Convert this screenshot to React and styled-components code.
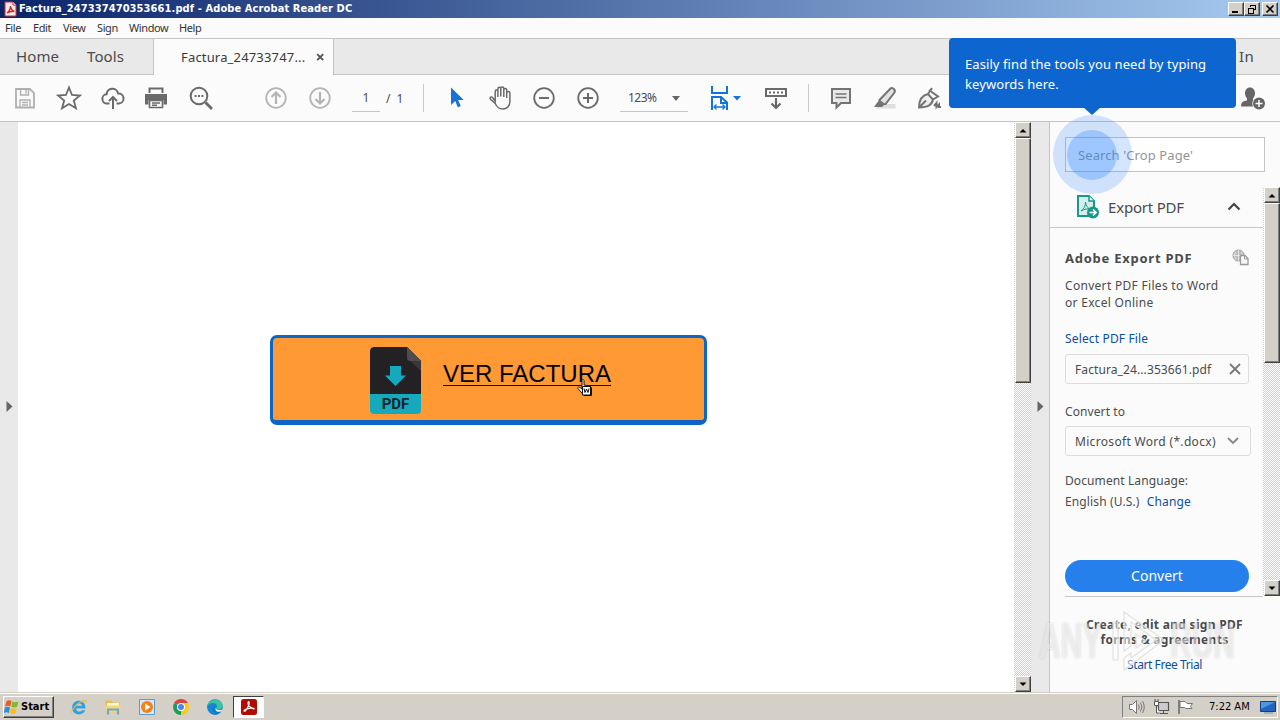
import React from 'react';
import styled, { createGlobalStyle, css } from 'styled-components';

const UI = '"Noto Sans", "Open Sans", sans-serif';
const CLASSIC = '"DejaVu Sans Condensed", "DejaVu Sans", sans-serif';

export default function App() {
  return (
    <Screen>
      <GlobalStyle />
      <TitleBar>
        <AppIcon />
        <WindowTitle>Factura_247337470353661.pdf - Adobe Acrobat Reader DC</WindowTitle>
        <WindowControls />
      </TitleBar>
      <MenuBar>
        <MenuItem $width={28}>File</MenuItem>
        <MenuItem $width={30}>Edit</MenuItem>
        <MenuItem $width={34}>View</MenuItem>
        <MenuItem $width={32}>Sign</MenuItem>
        <MenuItem $width={50}>Window</MenuItem>
        <MenuItem $width={30}>Help</MenuItem>
      </MenuBar>
      <TabBar>
        <NavTabs>
          <NavTab $width={71}>Home</NavTab>
          <NavTab $width={60}>Tools</NavTab>
        </NavTabs>
        <DocTab>
          <DocName>Factura_24733747...</DocName>
          <svg width='9' height='9' viewBox='0 0 9 9'>
            <path d='M1.2 1.2l6 6M7.2 1.2l-6 6' stroke='#555' strokeWidth='1.9' />
          </svg>
        </DocTab>
        <TabFill>Sign In</TabFill>
      </TabBar>
      <Toolbar />
      <Workspace>
        <SideHandle $width={18}>
          <Arrow />
        </SideHandle>
        <Page>
          <InvoiceButton>
            <PdfFileIcon />
            <InvoiceLink>VER FACTURA</InvoiceLink>
            <HandCursor />
          </InvoiceButton>
        </Page>
        <Scrollbar thumb={245} />
        <SideHandle $width={19} $bordered>
          <Arrow />
        </SideHandle>
        <ExportPanel />
      </Workspace>
      <Taskbar />
      <Pulse />
      <Tooltip>
        Easily find the tools you need by typing
        <br />
        keywords here.
      </Tooltip>
      <Watermark />
    </Screen>
  );
}

const AppIcon = () => (
  <svg width='13' height='16' viewBox='0 0 13 16'>
    <path d='M1 1h8l3 3v11H1z' fill='#fbe9e7' stroke='#d32f2f' />
    <path d='M9 1v3h3' fill='#fff' stroke='#d32f2f' />
    <path d='M3 12c2-1.5 3.5-4 3.500-7 .3 3 2 5 4 5.500-2-.6-5-.1-7.500 1.500z' fill='none' stroke='#d9231c' strokeWidth='1.400' />
  </svg>
);

const WindowControls = () => (
  <Controls>
    <ClassicButton $width={16} $height={14}>
      <svg width='10' height='10'>
        <path d='M1 8h6' stroke='#000' strokeWidth='2' />
      </svg>
    </ClassicButton>
    <ClassicButton $width={16} $height={14}>
      <svg width='10' height='10' shapeRendering='crispEdges'>
        <path d='M3.500 3V1.500h5v4H7M3 1h6M1.500 4v5h5V4zM1 4h6' fill='none' stroke='#000' />
      </svg>
    </ClassicButton>
    <Spacer $width={2} />
    <ClassicButton $width={16} $height={14}>
      <svg width='10' height='10'>
        <path d='M1.500 1.500l7 7M8.500 1.500l-7 7' stroke='#000' strokeWidth='1.600' />
      </svg>
    </ClassicButton>
  </Controls>
);

const Icon = ({ children, color = '#6a6a6a', viewBox = '0 0 26 26' }) => (
  <IconCell>
    <svg width='26' height='26' viewBox={viewBox} fill='none' stroke={color} strokeWidth='1.8'>
      {children}
    </svg>
  </IconCell>
);

const Toolbar = () => (
  <Tools>
    <Icon color='#b0b0b0'>
      <path d='M4 4h14l4 4v14.500H4z' />
      <path d='M8.500 4v6h8V4M14 5v3.500M8 22v-7h10v7M10 17.500h6M10 20h6' strokeWidth='1.400' />
    </Icon>
    <Icon>
      <path d='M13 2.500l3 7.500 8 .5-6.200 5 2.200 7.800-7-4.300-7 4.300 2.200-7.800-6.200-5 8-.5z' />
    </Icon>
    <Icon>
      <path d='M9.500 18.500H7.300a4.600 4.600 0 0 1-.7-9.200 5.800 5.800 0 0 1 11.500-.8 5 5 0 0 1 .9 10h-2.500M13 24V12.500M9 16l4-4 4 4' strokeWidth='2' />
    </Icon>
    <Icon viewBox='1 0 26 26'>
      <path d='M6.500 8V3.500h13V8' strokeWidth='2' />
      <path d='M2 9h22v10.500h-3.500V15h-15v4.500H2z' fill='#6a6a6a' stroke='none' />
      <path d='M6.500 15.500v7h13v-7zM9 18h8M9 20.300h5' strokeWidth='1.600' />
    </Icon>
    <Icon>
      <circle cx='11' cy='11' r='8.300' strokeWidth='2' />
      <path d='M17.500 17.500l6.500 6.500' strokeWidth='2.800' />
      <path d='M6.600 11h2M10 11h2M13.400 11h2' strokeWidth='2' />
    </Icon>
    <Spacer $width={31} />
    <Icon color='#b4b4b4'>
      <circle cx='13' cy='13' r='9.800' />
      <path d='M13 19V8M8.500 12L13 7.500l4.500 4.500' strokeWidth='2.200' />
    </Icon>
    <Icon color='#b4b4b4'>
      <circle cx='13' cy='13' r='9.800' />
      <path d='M13 7v11M8.500 14l4.500 4.500 4.500-4.500' strokeWidth='2.200' />
    </Icon>
    <Spacer $width={10} />
    <Field $width={28}>1</Field>
    <PageCount>/ 1</PageCount>
    <Divider />
    <Spacer $width={10} />
    <Icon viewBox='-1 0 26 26'>
      <path d='M7 2.500v17.500l4.200-4 2.600 6.300 3-1.300-2.700-6h5.600z' fill='#1473d6' stroke='none' />
    </Icon>
    <Icon viewBox='-1 0 26 26'>
      <path
        d='M7.200 16V6.500c0-2 2.700-2 2.700 0V12 4c0-2.200 2.900-2.200 2.900 0v7.500V3.500c0-2 3-2 3 0V12 5c0-2 2.900-2 2.900 0v8V8c0-2 3.200-2 3.200 0v8.500c0 4.500-3 7.500-7 7.500-4.500 0-6-2-7.700-5.500L2.300 14c-.8-1.600 1-2.600 2.200-1.500z'
        strokeWidth='1.500'
      />
    </Icon>
    <Icon>
      <circle cx='13' cy='13' r='9.800' />
      <path d='M8 13h10' strokeWidth='2' />
    </Icon>
    <Icon>
      <circle cx='13' cy='13' r='9.800' />
      <path d='M8 13h10M13 8v10' strokeWidth='2' />
    </Icon>
    <Spacer $width={10} />
    <Field $width={68} $zoom>
      123%
      <Caret width='8' height='5'>
        <path d='M0 0h8L4 5z' fill='#666' />
      </Caret>
    </Field>
    <Spacer $width={21} />
    <svg width='32' height='26' viewBox='0 0 32 26' fill='none' stroke='#1473d6' strokeWidth='2'>
      <path d='M3 1v7h15V1M3 25V12h9l6 5.500V25M12 12v6h6' />
      <path d='M5 22h11M7.500 19.500L5 22l2.500 2.500M13.500 19.500L16 22l-2.500 2.500' strokeWidth='1.300' />
      <path d='M24 11h8l-4 4.500z' fill='#1473d6' stroke='none' />
    </svg>
    <Spacer $width={13} />
    <Icon>
      <path d='M3 4h20v7H3z' strokeWidth='2' />
      <path d='M6 7.500h14' strokeWidth='2' strokeDasharray='2 2' />
      <path d='M13 13v9M8.500 18.500l4.500 4.500 4.500-4.500' strokeWidth='2.200' />
    </Icon>
    <Spacer $width={10} />
    <Divider />
    <Spacer $width={10} />
    <Icon color='#747474'>
      <path d='M4 4h18v14h-9l-4.500 4.500V18H4z' fill='#e9e9e9' strokeWidth='2' />
      <path d='M7.500 9h11M7.500 12.500h11' strokeWidth='1.300' />
    </Icon>
    <Icon color='#747474'>
      <path d='M9 19h14.500v4.500H4z' fill='#dedede' stroke='none' />
      <path d='M7.500 15L18.500 3.500c1.500-1.500 5.500 1 4 4L13.500 19l-5 .5z' fill='#e2e2e2' strokeWidth='2' />
      <path d='M7.500 14.500l5.500 4.500-3 3H2z' fill='#747474' stroke='none' />
    </Icon>
    <Icon color='#747474'>
      <path d='M3 22.500c0-7 2-12 9-13.500l5 5.500c-1 6-5.500 7.500-14 8zM3 22.500l7-7' fill='#eee' strokeWidth='2' />
      <path d='M12 9l4-6M13 5l9 6.500-5 3M18 21l2.500-3v4l2.500-2.500V22h2' strokeWidth='2' />
    </Icon>
    <Spacer $width={289} />
    <svg width='26' height='26' viewBox='0 0 26 26'>
      <path d='M5 8c0-7.500 10-7.500 10 0 0 3-1 4-2 5.500v2l3 1.500c-1.500 2-1.700 3-1.500 4.500H1c0-5 3-5.500 6-6v-2C6 12 5 11 5 8z' fill='#666' />
      <circle cx='19' cy='18.500' r='6.700' fill='#fbfbfb' />
      <circle cx='19' cy='18.500' r='6' fill='#666' />
      <path d='M15.500 18.500h7M19 15v7' stroke='#fff' strokeWidth='1.500' />
    </svg>
  </Tools>
);

const Arrow = () => (
  <svg width='7' height='11' viewBox='0 0 7 11'>
    <path d='M0.500 0l6 5.500-6 5.500z' fill='#666' />
  </svg>
);

const Scrollbar = ({ thumb }) => (
  <Track>
    <ClassicButton $width={16} $height={16}>
      <svg width='9' height='5'>
        <path d='M0.500 4.500h7L4 1z' fill='#000' />
      </svg>
    </ClassicButton>
    <Thumb style={{ height: thumb }} />
    <ClassicButton $width={16} $height={16} $end>
      <svg width='9' height='5'>
        <path d='M0.500 0.500h7L4 4z' fill='#000' />
      </svg>
    </ClassicButton>
  </Track>
);

const PdfFileIcon = () => (
  <FileIcon>
    <svg width='51' height='47' viewBox='0 0 51 47'>
      <path d='M4 0h33l14 14v33H0V4a4 4 0 0 1 4-4z' fill='#242124' />
      <path d='M37 0l14 14v10L37 11z' fill='#3a3738' />
      <path d='M37 0l14 14H40a3 3 0 0 1-3-3z' fill='#504c4d' />
      <path d='M20 19h11v9.500h5L25.500 39 15 28.500h5z' fill='#16a9bd' />
    </svg>
    <FileBand>PDF</FileBand>
  </FileIcon>
);

const HandCursor = () => (
  <CursorSvg width='16' height='18' viewBox='0 0 16 18'>
    <path d='M5 1.500c0-1.300 2-1.300 2 0V6l6 1 1.500 2v7.500H7L1 9.500C.5 8 2 7.500 3 8.500l2 1.500z' fill='#fff' stroke='#111' />
    <path d='M5.500 7.500h8v8.500h-8z' fill='#fff' stroke='#111' />
    <path d='M7 9.500l1 4 1.500-3.500 1.500 3.500 1-4' fill='none' stroke='#111' />
  </CursorSvg>
);

const ExportPanel = () => (
  <Panel>
    <SearchBox>Search 'Crop Page'</SearchBox>
    <PanelBody>
      <PanelContent>
        <PanelHeader>
          <svg width='24' height='26' viewBox='0 0 24 26'>
            <path d='M2 2h11l5 5v15H2z' fill='#d6eeeb' stroke='#16998c' strokeWidth='2' />
            <path d='M13 2v5h5' fill='#fff' stroke='#16998c' strokeWidth='1.500' />
            <path d='M5 17c3-2 4.500-5 4.500-9 .5 4 2 6 5 7-3-.5-6 0-9.500 2z' fill='none' stroke='#16998c' />
            <circle cx='17' cy='18.500' r='6' fill='#16998c' />
            <path d='M13.500 18.500h6M17 15.500l3 3-3 3' fill='none' stroke='#fff' strokeWidth='1.700' />
          </svg>
          <HeaderLabel>Export PDF</HeaderLabel>
          <svg width='14' height='11' viewBox='0 0 14 11'>
            <path d='M1.500 7.500L7 2l5.500 5.500' fill='none' stroke='#444' strokeWidth='2.200' />
          </svg>
        </PanelHeader>
        <Form>
          <FormTitle>
            Adobe Export PDF
            <svg width='17' height='17' viewBox='0 0 17 17'>
              <circle cx='6.500' cy='6.500' r='5.500' fill='#bbb' stroke='#999' />
              <path d='M1 6.500h11M6.500 1v11M3.500 2.500q-2 4 0 8M9.500 2.500q2 4 0 8' stroke='#eee' strokeWidth='.8' fill='none' />
              <path d='M8.500 6.500h4.500l3 3v6H8.500z' fill='#fafafa' stroke='#999' strokeWidth='1.300' />
              <path d='M12.500 6.500v3.500H16' fill='none' stroke='#999' />
            </svg>
          </FormTitle>
          <Intro>
            Convert PDF Files to Word
            <br />
            or Excel Online
          </Intro>
          <SelectFile>Select PDF File</SelectFile>
          <InputBox $width={184}>
            <FileName>Factura_24...353661.pdf</FileName>
            <svg width='12' height='12' viewBox='0 0 12 12'>
              <path d='M1 1l10 10M11 1L1 11' stroke='#777' strokeWidth='1.800' />
            </svg>
          </InputBox>
          <ConvertLabel>Convert to</ConvertLabel>
          <InputBox $width={186}>
            <Format>Microsoft Word (*.docx)</Format>
            <svg width='12' height='8' viewBox='0 0 12 8'>
              <path d='M1 1l5 5 5-5' fill='none' stroke='#888' strokeWidth='1.900' />
            </svg>
          </InputBox>
          <LanguageLabel>Document Language:</LanguageLabel>
          <Language>
            English (U.S.) <ChangeLink>Change</ChangeLink>
          </Language>
          <ConvertButton>Convert</ConvertButton>
        </Form>
      </PanelContent>
      <Scrollbar thumb={160} />
    </PanelBody>
    <Promo>
      Create, edit and sign PDF
      <br />
      forms &amp; agreements
      <TrialLink>Start Free Trial</TrialLink>
    </Promo>
  </Panel>
);

const Taskbar = () => (
  <Bar>
    <StartButton>
      <svg width='16' height='16' viewBox='0 0 16 16'>
        <path d='M2.500 2.500Q5 .5 7.500 2L6.300 7.500Q4 6 1 7.500z' fill='#ee5a22' />
        <path d='M8.500 2.500Q11 4 14.500 2.500L13 8Q10 9 7.300 7.800z' fill='#7fba28' />
        <path d='M.8 8.700Q3.500 7 6 8.500L4.800 14Q2.500 12.500-.2 14z' fill='#2c8fd8' />
        <path d='M7 9Q10 10.500 12.800 9.200L11.500 14.500Q8.500 15.800 5.800 14z' fill='#fcbd1e' />
      </svg>
      Start
    </StartButton>
    <Launchers>
      <svg width='18' height='18' viewBox='0 0 18 18'>
        <path d='M15.500 10.500H6c.4 3.500 4.500 4 6 1.800h3.200c-2 6-13 5.700-13-2.800C2.200.5 16 .5 15.500 10.500zM6 7.800h6c-.5-3-5.500-3-6 0z' fill='#2fa3e0' />
        <path d='M2 16C-1 13 7 4 14 2c4-.8 3 2.500 2 4 .5-3-1-3.200-3-2.400C7 6 1.500 12.500 2 16z' fill='#efb93b' />
      </svg>
      <svg width='18' height='18' viewBox='0 0 18 18'>
        <path d='M1.500 2.500h6l1.500 2h7v10H1.500z' fill='#e7bd55' />
        <path d='M3 5h12v6H3z' fill='#fff6cc' />
        <path d='M1.500 7.500h15v7h-15z' fill='#f5d77a' />
        <path d='M4 16.500V11.500h10v5' fill='none' stroke='#67a9d8' strokeWidth='2.200' />
      </svg>
      <svg width='18' height='18' viewBox='0 0 18 18'>
        <path d='M1.500 1.500h15v15h-15z' fill='#d5e8f8' stroke='#5b9bd5' />
        <circle cx='9' cy='9' r='6' fill='#f48216' />
        <path d='M7 5.500v7L12.500 9z' fill='#fff' />
      </svg>
      <svg width='18' height='18' viewBox='0 0 18 18'>
        <path d='M9 9L2.100 5A8 8 0 0 1 15.900 5z' fill='#db4437' />
        <path d='M9 9L2.100 5A8 8 0 0 0 9 17l4-6z' fill='#1f9d58' />
        <path d='M9 9l0 8A8 8 0 0 0 15.900 5H9z' fill='#fbc916' />
        <circle cx='9' cy='9' r='4' fill='#fff' />
        <circle cx='9' cy='9' r='3' fill='#4285f4' />
      </svg>
      <svg width='18' height='18' viewBox='0 0 18 18'>
        <circle cx='9' cy='9' r='7.800' fill='#127bc9' />
        <path d='M1.300 8C2 0 16.500-.5 16.800 8c0 3-4 4-6.300 2.700C12 7 7 4.500 1.300 8z' fill='#38c5a0' />
        <path d='M1.300 8c3-4.500 10-3.500 9.500.5-3-2-6 2-3.300 5.500C10 16.500 13 16.500 15 14c-4 5-13.500 3-13.700-6z' fill='#1486d2' />
        <path d='M10.500 8.500c-1.500 2 .5 4.500 6 3l-1 1.700c-4 2-8-1-5-4.700z' fill='#e4ecef' />
      </svg>
    </Launchers>
    <ActiveTask>
      <svg width='16' height='16' viewBox='0 0 16 16'>
        <rect width='16' height='16' rx='2.500' fill='#b30b00' />
        <path d='M3 12c-1-1.500 8.500-4 10-2.500S7 8 7 4.500s2-1.500 1 1S4.500 13.500 3 12z' fill='none' stroke='#fff' strokeWidth='1.100' />
      </svg>
    </ActiveTask>
    <Tray>
      <svg width='18' height='16' viewBox='0 0 18 16' fill='none' stroke='#777'>
        <path d='M1.500 5.500h3l4-4v13l-4-4h-3z' fill='#fff' />
        <path d='M10.500 5.500q1.500 2.500 0 5M12.500 3.500q3 4.500 0 9M14.500 2q3.500 6 0 12' />
      </svg>
      <svg width='17' height='16' viewBox='0 0 17 16' fill='none' stroke='#555'>
        <path d='M5.500 3.500h10v8h-10z' fill='#ccc' strokeWidth='1.200' />
        <path d='M7 14.500h8M10.500 12v2M1.500 2.500h4v4h-4zM2 0v2M5 0v2M3.500 7v7h3' fill='#fff' />
      </svg>
      <svg width='17' height='16' viewBox='0 0 17 16'>
        <path d='M2 1v14' stroke='#777' strokeWidth='1.800' />
        <path d='M3 2.500h5l2 2h5.500l-2 3 1.500 2H9l-1.500-1H3z' fill='#fff' stroke='#777' />
      </svg>
      <Clock>7:22 AM</Clock>
      <svg width='16' height='14' viewBox='0 0 16 14'>
        <path d='M0.500 1.500h15v10H.5z' fill='#2464bd' stroke='#173f7c' />
        <path d='M1 2h14L1 9z' fill='#4e96e6' />
        <path d='M4 13h9' stroke='#8aa' strokeWidth='1.500' />
      </svg>
    </Tray>
  </Bar>
);

const Watermark = () => (
  <WatermarkLayer>
    <WatermarkWord $width={73} $scale={0.6}>
      ANY
    </WatermarkWord>
    <svg width='58' height='62' viewBox='0 0 58 62' fill='#fff' fillOpacity='.5' stroke='#e2e2e2' strokeWidth='1.200'>
      <path d='M1 12h5v38H1z' />
      <path d='M12 2l40 28-40 30V48l7-5v5l25-18-25-18v24l-7 5z' />
      <path d='M24 24l10 7-10 7z' />
    </svg>
    <WatermarkWord $width={66} $scale={0.6}>
      RUN
    </WatermarkWord>
  </WatermarkLayer>
);

const GlobalStyle = createGlobalStyle`
  * { box-sizing: border-box; }
  body { margin: 0; overflow: hidden; }
  svg { display: block; flex: none; }
`;

const Screen = styled.div`
  position: relative;
  display: flex;
  flex-direction: column;
  width: 1280px;
  height: 720px;
  overflow: hidden;
  background: #fbfbfb;
  color: #4b4b4b;
  font: 13px ${UI};
  white-space: nowrap;
`;

const Spacer = styled.div`
  flex: none;
  width: ${(p) => p.$width}px;
`;

const raised = css`
  background: #d4d0c8;
  border: 1px solid;
  border-color: #fff #404040 #404040 #fff;
  box-shadow: inset -1px -1px #808080;
`;

const ClassicButton = styled.div`
  ${raised}
  display: flex;
  flex: none;
  align-items: center;
  justify-content: center;
  width: ${(p) => p.$width}px;
  height: ${(p) => p.$height}px;
  margin-top: ${(p) => (p.$end ? 'auto' : 0)};
`;

const TitleBar = styled.div`
  display: flex;
  align-items: center;
  height: 18px;
  padding: 0 2px 0 4px;
  background: linear-gradient(90deg, #0a246a, #a6caf0);
`;

const WindowTitle = styled.div`
  flex: 1;
  padding-left: 2px;
  color: #fff;
  font: bold 11px/18px ${CLASSIC};
  letter-spacing: 0.1px;
`;

const Controls = styled.div`
  display: flex;
`;

const MenuBar = styled.div`
  display: flex;
  height: 20px;
  padding-left: 5px;
`;

const MenuItem = styled.div`
  width: ${(p) => p.$width}px;
  color: #333;
  font: 11px/20px ${UI};
  letter-spacing: -0.4px;
`;

const TabBar = styled.div`
  display: flex;
  height: 37px;
  border-top: 1px solid #c4c4c4;
  line-height: 36px;
`;

const NavTabs = styled.div`
  display: flex;
  width: 154px;
  padding-left: 16px;
  background: #e9e9e9;
  border-right: 1px solid #c4c4c4;
  border-bottom: 1px solid #c4c4c4;
`;

const NavTab = styled.div`
  width: ${(p) => p.$width}px;
  font-size: 15px;
  letter-spacing: 0.1px;
  line-height: 35px;
`;

const DocTab = styled.div`
  display: flex;
  align-items: center;
  width: 179px;
  padding-left: 27px;
`;

const DocName = styled.div`
  width: 135px;
  color: #3a3a3a;
  font-size: 13px;
  letter-spacing: 0.17px;
`;

const TabFill = styled.div`
  flex: 1;
  padding-right: 26px;
  background: #e9e9e9;
  border-left: 1px solid #c4c4c4;
  border-bottom: 1px solid #c4c4c4;
  font-size: 15px;
  letter-spacing: 0.3px;
  line-height: 35px;
  text-align: right;
`;

const Tools = styled.div`
  display: flex;
  align-items: center;
  height: 47px;
  padding-left: 3px;
  border-bottom: 1px solid #c4c4c4;
`;

const IconCell = styled.div`
  display: flex;
  flex: none;
  justify-content: center;
  width: 44px;
`;

const Field = styled.div`
  display: flex;
  flex: none;
  align-items: center;
  justify-content: ${(p) => (p.$zoom ? 'flex-start' : 'center')};
  width: ${(p) => p.$width}px;
  height: 28px;
  padding-left: ${(p) => (p.$zoom ? 8 : 0)}px;
  border-bottom: 1px solid #c4c4c4;
  font-size: 12px;
  letter-spacing: ${(p) => (p.$zoom ? '-0.5px' : 0)};
`;

const Caret = styled.svg`
  margin: 1px 8px 0 auto;
`;

const PageCount = styled.div`
  flex: none;
  width: 43px;
  padding-left: 6px;
  font-size: 12px;
  word-spacing: 3px;
`;

const Divider = styled.div`
  flex: none;
  width: 1px;
  height: 28px;
  background: #c9c9c9;
`;

const Workspace = styled.div`
  display: flex;
  height: 570px;
`;

const SideHandle = styled.div`
  display: flex;
  flex: none;
  align-items: center;
  justify-content: center;
  width: ${(p) => p.$width}px;
  padding-bottom: 2px;
  background: #e9e9e9;
  border-right: ${(p) => (p.$bordered ? '1px solid #c4c4c4' : 0)};
`;

const Page = styled.div`
  flex: 1;
  padding: 213px 0 0 252px;
  background: #fff;
`;

const InvoiceButton = styled.div`
  position: relative;
  display: flex;
  width: 437px;
  height: 90px;
  padding: 9px 0 0 97px;
  background: #ff9933;
  border: 3px solid #0b66c8;
  border-bottom-width: 5px;
  border-radius: 7px;
`;

const FileIcon = styled.div`
  width: 51px;
  height: 67px;
  overflow: hidden;
  border-radius: 4px;
`;

const FileBand = styled.div`
  height: 20px;
  background: #16a9bd;
  color: #10262c;
  font: bold 15px/20px Roboto, sans-serif;
  text-align: center;
`;

const InvoiceLink = styled.div`
  margin-left: 22px;
  color: #000;
  font: 24px/53px "Liberation Sans", Arial, sans-serif;
  text-decoration: underline;
  text-decoration-thickness: 1px;
  text-underline-offset: 3px;
`;

const CursorSvg = styled.svg`
  position: absolute;
  left: 304px;
  top: 41px;
`;

const Track = styled.div`
  display: flex;
  flex: none;
  flex-direction: column;
  width: 17px;
  padding-left: 1px;
  background: repeating-conic-gradient(#d4d0c8 0 25%, #fff 0 50%) 0 0 / 2px 2px;
`;

const Thumb = styled.div`
  ${raised}
  width: 16px;
`;

const Panel = styled.div`
  flex: none;
  width: 230px;
  padding-top: 15px;
`;

const SearchBox = styled.div`
  width: 200px;
  height: 35px;
  margin-left: 15px;
  padding-left: 12px;
  background: #fff;
  border: 1px solid #c4c4c4;
  color: #959595;
  letter-spacing: 0.1px;
  line-height: 35px;
`;

const PanelBody = styled.div`
  display: flex;
  height: 409px;
  margin-top: 15px;
`;

const PanelContent = styled.div`
  flex: 1;
`;

const PanelHeader = styled.div`
  display: flex;
  align-items: center;
  height: 41px;
  padding-left: 26px;
  border-bottom: 1px solid #c9c9c9;
`;

const HeaderLabel = styled.div`
  width: 127px;
  padding-left: 8px;
  font-size: 15px;
  letter-spacing: -0.2px;
`;

const Form = styled.div`
  height: 369px;
  margin-left: 15px;
  border-bottom: 1px solid #c9c9c9;
`;

const FormTitle = styled.div`
  display: flex;
  justify-content: space-between;
  width: 184px;
  padding-top: 21px;
  font-size: 13px;
  font-weight: bold;
  letter-spacing: 0.75px;
  line-height: 18px;
`;

const Intro = styled.div`
  margin-top: 10px;
  font-size: 12px;
  letter-spacing: 0.3px;
  line-height: 17px;
`;

const SelectFile = styled.div`
  margin: 19px 0 6px;
  color: #0d4f9e;
  font-size: 12px;
  letter-spacing: 0.15px;
  line-height: 18px;
`;

const InputBox = styled.div`
  display: flex;
  align-items: center;
  width: ${(p) => p.$width}px;
  height: 30px;
  padding-left: 9px;
  border: 1px solid #dcdcdc;
  border-radius: 3px;
`;

const FileName = styled.div`
  width: 154px;
  font-size: 12px;
  letter-spacing: 0.1px;
`;

const Format = styled(FileName)`
  width: 152px;
  padding-top: 1px;
  letter-spacing: 0.32px;
`;

const ConvertLabel = styled.div`
  margin: 19px 0 5px;
  font-size: 12px;
  letter-spacing: 0.1px;
  line-height: 18px;
`;

const LanguageLabel = styled.div`
  margin-top: 16px;
  font-size: 12px;
  letter-spacing: 0.1px;
  line-height: 18px;
`;

const Language = styled.div`
  margin-top: 3px;
  font-size: 12px;
  letter-spacing: 0.13px;
  line-height: 18px;
`;

const ChangeLink = styled.span`
  margin-left: 4px;
  color: #0d4f9e;
`;

const ConvertButton = styled.div`
  width: 184px;
  height: 32px;
  margin-top: 49px;
  background: #2680eb;
  border-radius: 16px;
  color: #fff;
  font-size: 14px;
  line-height: 31px;
  text-align: center;
`;

const Promo = styled.div`
  padding: 21px 0 0 15px;
  width: 214px;
  font-size: 12px;
  font-weight: bold;
  letter-spacing: 0.3px;
  line-height: 15px;
  text-align: center;
`;

const TrialLink = styled.div`
  margin-top: 10px;
  color: #0d4f9e;
  font-size: 12px;
  font-weight: normal;
  letter-spacing: -0.42px;
`;

const Bar = styled.div`
  display: flex;
  height: 28px;
  padding: 3px 2px 2px 3px;
  background: #d4d0c8;
  border-top: 1px solid #d4d0c8;
  box-shadow: inset 0 1px #fff;
`;

const StartButton = styled.div`
  ${raised}
  display: flex;
  align-items: center;
  gap: 1px;
  width: 51px;
  height: 22px;
  color: #000;
  font: bold 11px/20px ${CLASSIC};
`;

const Launchers = styled.div`
  display: flex;
  gap: 16px;
  padding: 2px 0 0 16px;
`;

const ActiveTask = styled.div`
  display: flex;
  align-items: center;
  justify-content: center;
  width: 31px;
  height: 22px;
  margin-left: 9px;
  background: #fff;
  border: 1px solid;
  border-color: #404040 #fff #fff #404040;
`;

const Tray = styled.div`
  display: flex;
  align-items: center;
  gap: 7px;
  width: 156px;
  height: 22px;
  margin-left: auto;
  padding-left: 5px;
  border: 1px solid;
  border-color: #808080 #fff #fff #808080;
`;

const Clock = styled.div`
  width: 44px;
  margin-left: 8px;
  color: #000;
  font: 11px/20px ${CLASSIC};
`;

const Pulse = styled.div`
  position: absolute;
  left: 1053px;
  top: 115px;
  width: 79px;
  height: 79px;
  background: rgba(38, 128, 255, 0.2);
  border-radius: 50%;

  &::after {
    content: '';
    position: absolute;
    inset: 15px 15px 14px 14px;
    background: rgba(38, 128, 255, 0.3);
    border-radius: 50%;
  }
`;

const Tooltip = styled.div`
  position: absolute;
  left: 949px;
  top: 38px;
  width: 287px;
  height: 70px;
  padding: 16px 16px 0;
  background: #0d66d0;
  border-radius: 4px;
  color: #fff;
  font-size: 13px;
  letter-spacing: 0.08px;
  line-height: 20px;

  &::after {
    content: '';
    position: absolute;
    left: 134px;
    top: 69px;
    border: solid transparent;
    border-width: 8px 9px 0;
    border-top-color: #0d66d0;
  }
`;

const WatermarkLayer = styled.div`
  position: absolute;
  left: 1039px;
  top: 610px;
  display: flex;
  align-items: center;
`;

const WatermarkWord = styled.div`
  width: ${(p) => p.$width}px;
  transform: scaleX(${(p) => p.$scale});
  transform-origin: left;
  color: rgba(255, 255, 255, 0.5);
  font: bold 50px/60px "Liberation Sans", sans-serif;
  text-shadow: 0 0 3px rgba(0, 0, 0, 0.15);
`;
